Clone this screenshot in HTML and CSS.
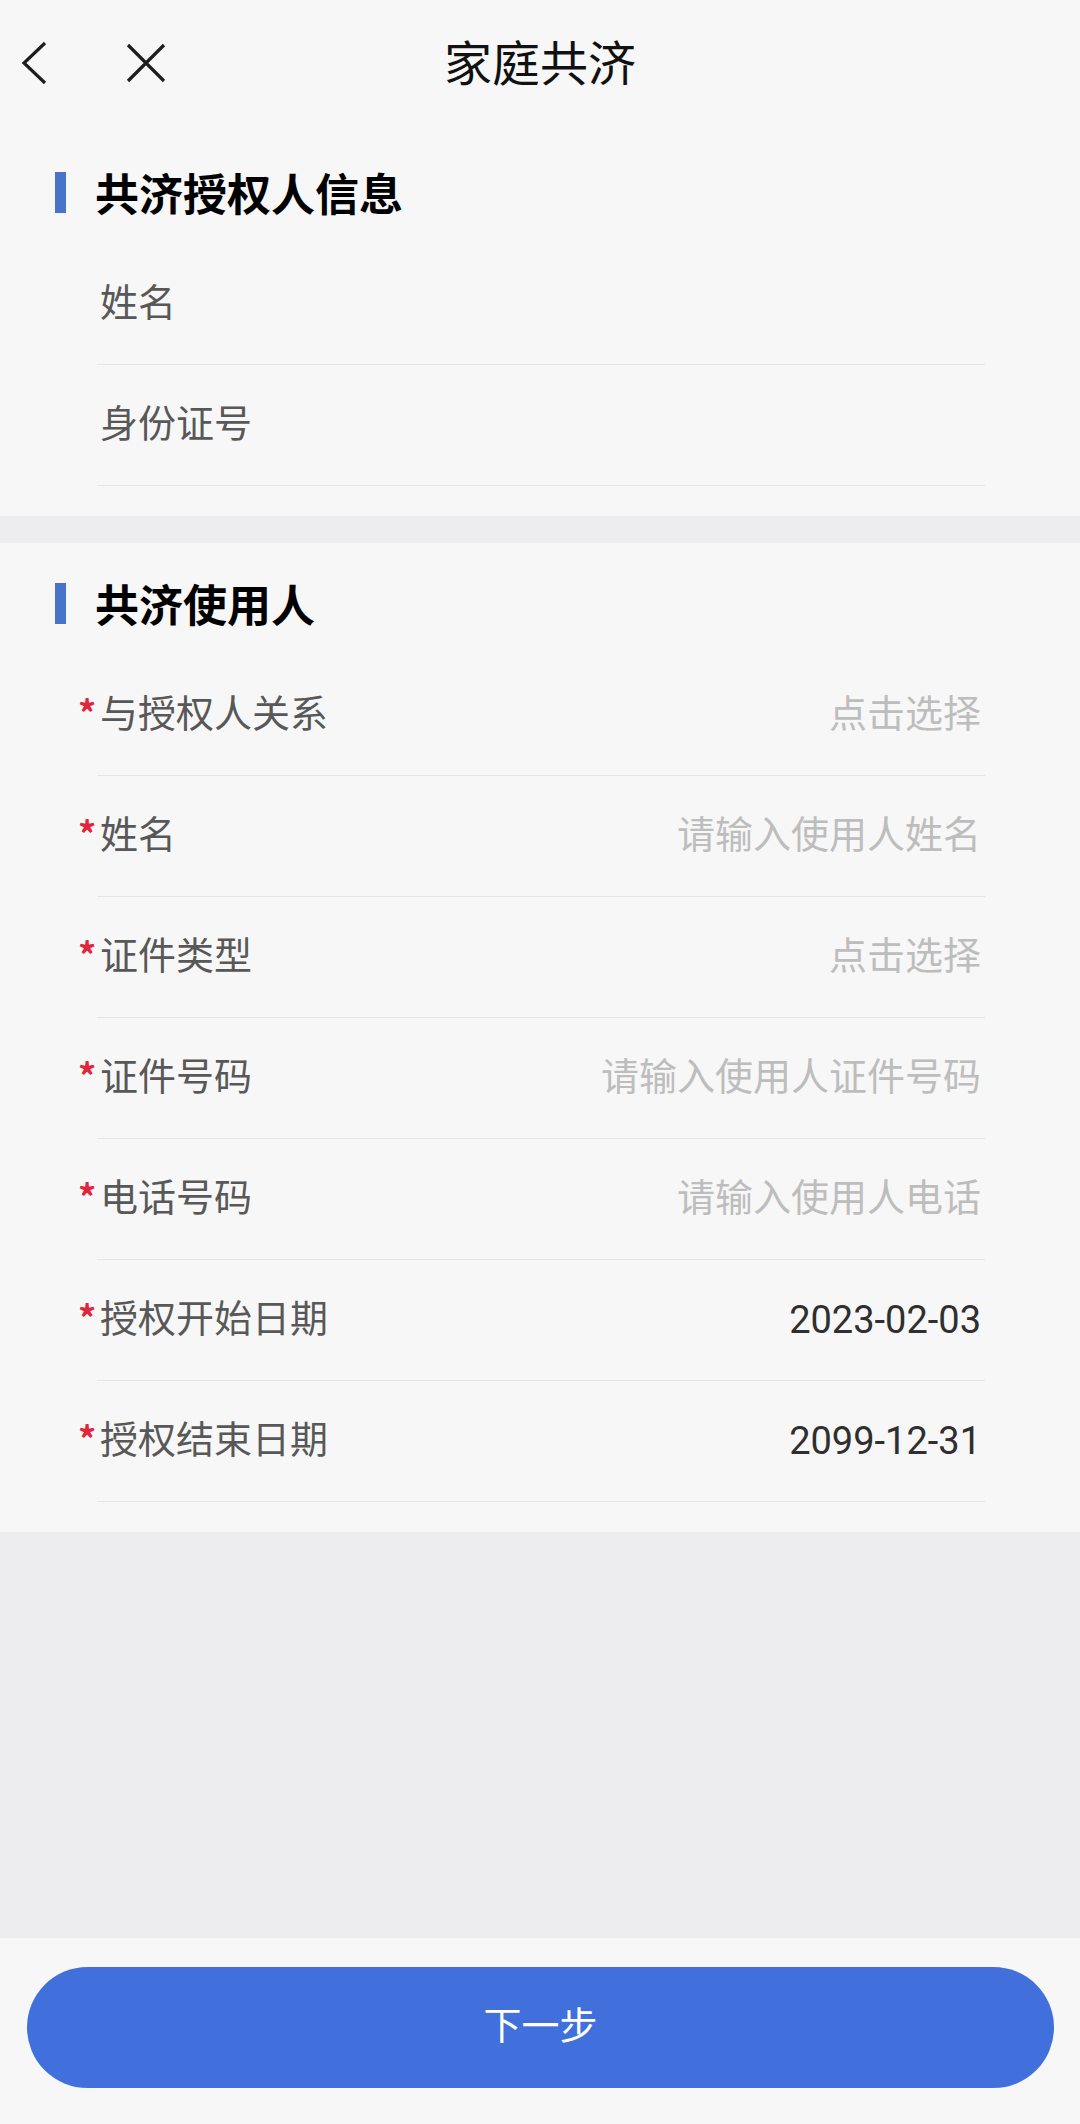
FILE: index.html
```html
<!DOCTYPE html>
<html lang="zh-CN">
<head>
    <meta charset="utf-8">
    <title>家庭共济</title>
    <meta name="viewport" content="width=device-width, initial-scale=1">
    <link rel="stylesheet" href="styles.css">
</head>
<body>
    <header class="hd">
        <div class="hd-l">
            <svg class="ic ic-back" viewBox="0 0 28 44" width="28" height="44"><path d="M25 2 L4 22 L25 42" /></svg>
            <svg class="ic ic-x" viewBox="0 0 40 40" width="40" height="40"><path d="M2 2 L38 38 M38 2 L2 38" /></svg>
        </div>
        <div class="hd-t">家庭共济</div>
        <div></div>
    </header>

    <!-- 共济授权人信息 -->
    <section class="sec">
        <h2 class="st">共济授权人信息</h2>
        <div class="row"><span class="lb">姓名</span></div>
        <div class="row"><span class="lb">身份证号</span></div>
    </section>

    <!-- 共济使用人 -->
    <section class="sec">
        <h2 class="st">共济使用人</h2>
        <div class="row"><span class="lb"><i>*</i>与授权人关系</span><span class="ph">点击选择</span></div>
        <div class="row"><span class="lb"><i>*</i>姓名</span><span class="ph">请输入使用人姓名</span></div>
        <div class="row"><span class="lb"><i>*</i>证件类型</span><span class="ph">点击选择</span></div>
        <div class="row"><span class="lb"><i>*</i>证件号码</span><span class="ph">请输入使用人证件号码</span></div>
        <div class="row"><span class="lb"><i>*</i>电话号码</span><span class="ph">请输入使用人电话</span></div>
        <div class="row"><span class="lb"><i>*</i>授权开始日期</span><span class="vl">2023-02-03</span></div>
        <div class="row"><span class="lb"><i>*</i>授权结束日期</span><span class="vl">2099-12-31</span></div>
    </section>

    <footer class="ft">
        <button class="nb">下一步</button>
    </footer>
</body>
</html>
```

FILE: styles.css
```css
/* 颜色变量 */
:root {
    --bg: #ededef;   /* 页面底色 */
    --w: #f7f7f7;    /* 卡片底色 */
    --line: #e5e5e7; /* 分隔线 */
    --blue: #4170dd; /* 主色 */
    --red: #e0263a;  /* 必填星号 */
}

html, body {
    margin: 0;
    padding: 0;
    height: 100%;
}

body {
    display: flex;
    flex-direction: column;
    min-height: 100vh;
    background-color: var(--bg);
    font-family: "Noto Sans CJK SC", "Noto Sans", sans-serif;
}

/* 顶部导航 */
.hd {
    display: grid;
    grid-template-columns: 1fr auto 1fr;
    align-items: center;
    height: 132px;
    background-color: var(--w);
}

.hd-l {
    display: flex;
    align-items: center;
    gap: 78px;
    padding-left: 20px;
    padding-bottom: 6px;
}

.ic path {
    fill: none;
    stroke: #1e1e1e;
    stroke-width: 3.2;
}

.hd-t {
    font-size: 48px;
    color: #111;
    padding-bottom: 12px;
}

/* 分组 */
.sec {
    background-color: var(--w);
    padding: 14px 0 30px;
}

.sec + .sec {
    margin-top: 27px;
}

.st {
    display: flex;
    align-items: center;
    gap: 29px;
    height: 98px;
    box-sizing: border-box;
    margin: 0;
    padding: 0 0 6px 55px;
    font-size: 44px;
    font-weight: 700;
    color: #000;
}

.st::before {
    content: "";
    width: 11px;
    height: 41px;
    background-color: #4773c9;
}

.row {
    display: flex;
    justify-content: space-between;
    align-items: center;
    height: 120px;
    margin: 0 95px 0 97px;
    padding: 0 4px 0 3px;
    border-bottom: 1px solid var(--line);
    font-size: 38px;
}

.row > span {
    padding-bottom: 10px;
}

.lb {
    color: #585858;
    display: flex;
    align-items: baseline;
}

.lb i {
    font-style: normal;
    font-size: 36px;
    font-weight: 700;
    line-height: 1;
    color: var(--red);
    width: 22px;
    margin-left: -22px;
}

.ph {
    color: #bdbdbd;
}

.row > .vl {
    padding-bottom: 0;
    color: #2f2f2f;
    font-family: Roboto, "Noto Sans CJK SC", sans-serif;
}

/* 底部按钮 */
.ft {
    margin-top: auto;
    background-color: var(--w);
    padding: 29px 26px 36px 27px;
}

.nb {
    display: block;
    width: 100%;
    height: 121px;
    padding: 0 0 10px;
    border: none;
    border-radius: 61px;
    background-color: var(--blue);
    color: #fff;
    font-family: "Noto Sans CJK SC", sans-serif;
    font-size: 38px;
}
```
